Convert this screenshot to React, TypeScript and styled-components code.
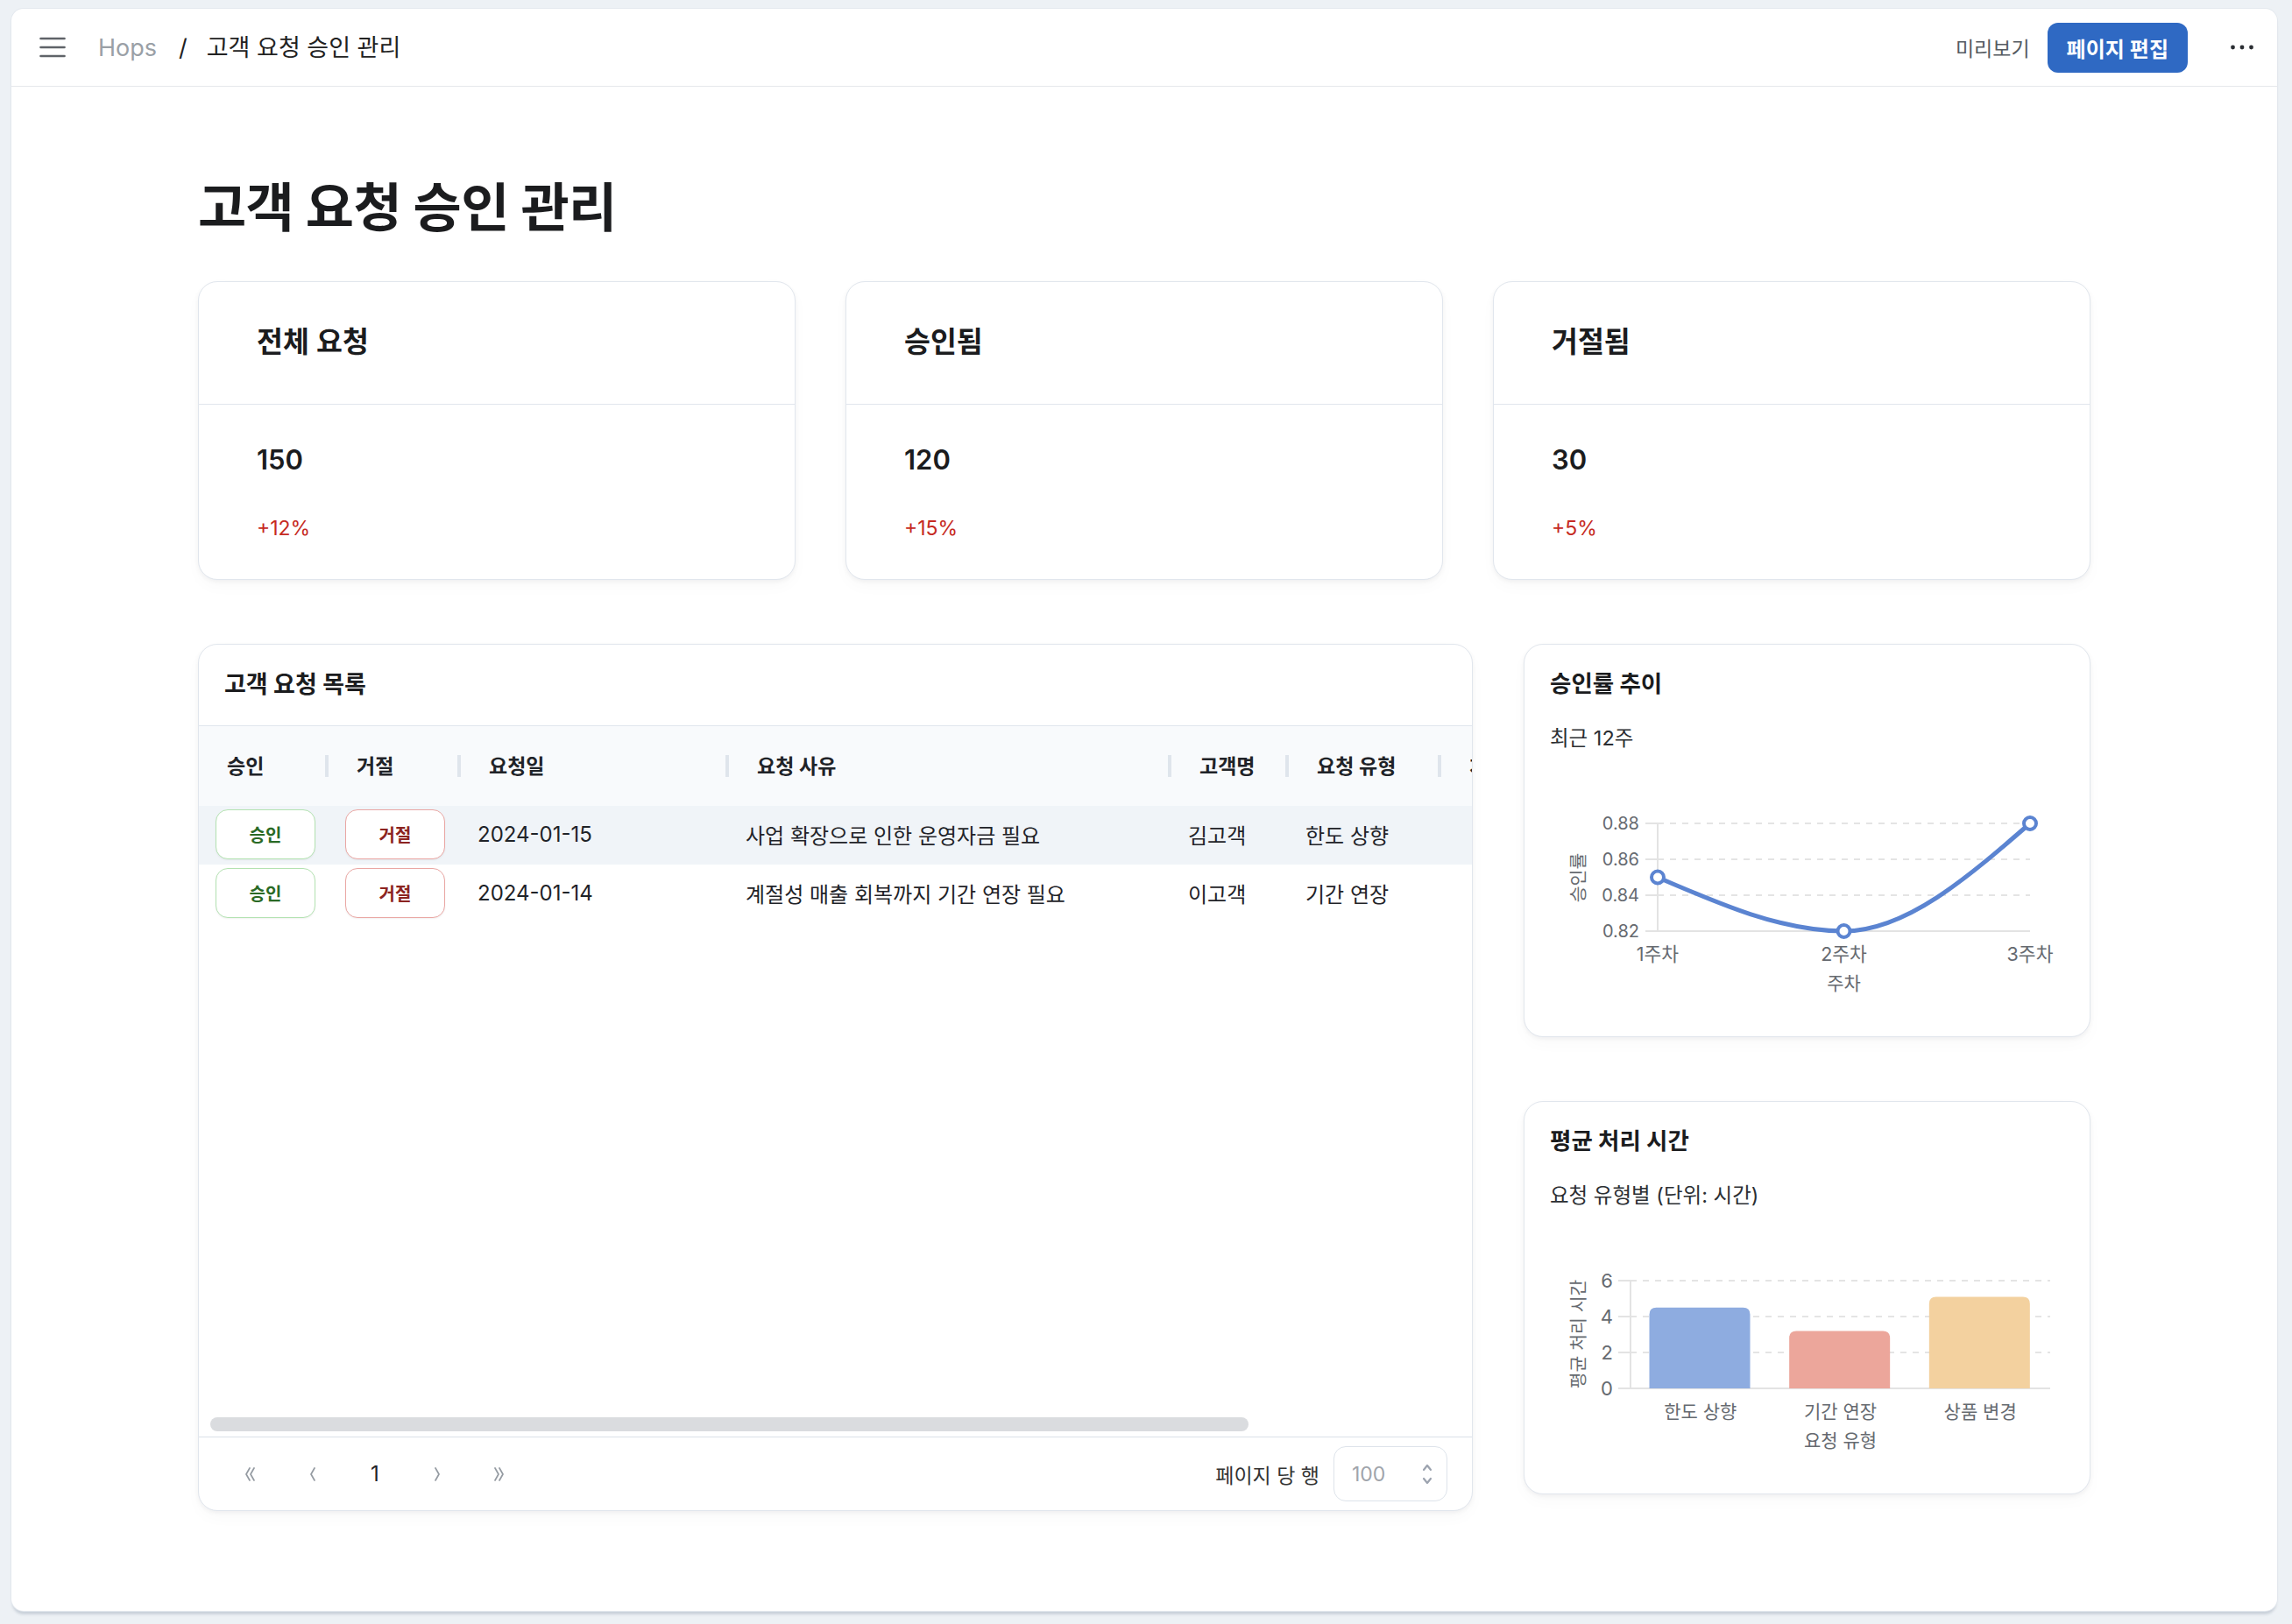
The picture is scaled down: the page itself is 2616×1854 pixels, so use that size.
import React from 'react';
import styled, { createGlobalStyle } from 'styled-components';

const FONT = `Inter, "Noto Sans CJK KR", "Noto Sans", sans-serif`;

const Global = createGlobalStyle`
  html, body { margin: 0; padding: 0; background: #edf1f5; }
  body { font-family: ${FONT}; color: #1f2328; -webkit-font-smoothing: antialiased; }
  * { box-sizing: border-box; }
`;

const Frame = styled.div`
  height: 1854px;
  padding: 10px 17px 15px 13px;
  display: flex;
`;

const Panel = styled.div`
  flex: 1;
  background: #fff;
  border-radius: 14px;
  box-shadow: 0 0 0 1px #e3e8ee, 0 5px 3px -1px rgba(120, 135, 155, 0.3);
  display: flex;
  flex-direction: column;
  overflow: hidden;
`;

const TopBar = styled.header`
  height: 89px;
  flex: none;
  border-bottom: 1px solid #e6e8eb;
  display: flex;
  align-items: center;
  padding: 0 15px 0 31px;
`;

const IconButton = styled.button<{ $w?: number }>`
  border: 0;
  background: transparent;
  padding: 0;
  display: flex;
  align-items: center;
  justify-content: center;
  width: ${(p) => p.$w ?? 32}px;
  height: 40px;
  color: #5f6368;
  cursor: pointer;
`;

const MoreButton = styled(IconButton)`
  margin-left: 37px;
`;

const Crumbs = styled.nav`
  display: flex;
  align-items: center;
  margin-left: 36px;
  font-size: 27px;
  line-height: 1;
`;

const CrumbRoot = styled.span`
  color: #9aa0a6;
`;

const CrumbSep = styled.span`
  color: #222;
  margin: 0 22px 0 25px;
`;

const CrumbCurrent = styled.span`
  color: #222;
`;

const Spacer = styled.div`
  flex: 1;
`;

const PreviewLink = styled.span`
  font-size: 23px;
  color: #555b61;
`;

const PrimaryButton = styled.button`
  margin-left: 20px;
  height: 57px;
  padding: 0 22px;
  border: 0;
  border-radius: 12px;
  background: #2f69c3;
  color: #fff;
  font-family: ${FONT};
  font-size: 24px;
  font-weight: 600;
`;

const Main = styled.main`
  flex: 1;
`;

const Content = styled.div`
  width: 2160px;
  margin: 0 auto;
`;

const PageTitle = styled.h1`
  margin: 103px 0 49px;
  font-size: 60px;
  line-height: 70px;
  font-weight: 700;
  letter-spacing: -0.6px;
  color: #1b1c1e;
`;

const StatGrid = styled.div`
  display: grid;
  grid-template-columns: repeat(3, 1fr);
  gap: 57px;
`;

const Card = styled.section`
  background: #fff;
  border: 1px solid #e1e6ed;
  border-radius: 22px;
  box-shadow: 0 2px 5px rgba(15, 23, 42, 0.05), 0 8px 18px rgba(15, 23, 42, 0.025);
`;

const StatCard = styled(Card)`
  height: 341px;
`;

const StatHead = styled.div`
  height: 140px;
  display: flex;
  align-items: center;
  padding: 0 66px 8px;
  border-bottom: 1px solid #e1e6ed;
  font-size: 32.5px;
  font-weight: 600;
  color: #1b1c1e;
`;

const StatBody = styled.div`
  padding: 43px 66px 0;
`;

const StatValue = styled.div`
  font-size: 31px;
  line-height: 40px;
  font-weight: 600;
  color: #1b1c1e;
`;

const StatDelta = styled.div`
  margin-top: 44px;
  font-size: 23px;
  line-height: 28px;
  color: #c62a22;
`;

const Lower = styled.div`
  margin-top: 73px;
  display: grid;
  grid-template-columns: 1fr 647px;
  gap: 58px;
  align-items: start;
`;

const TableCard = styled(Card)`
  height: 990px;
  display: flex;
  flex-direction: column;
  overflow: hidden;
`;

const CardTitleBar = styled.div`
  height: 93px;
  flex: none;
  display: flex;
  align-items: center;
  padding: 0 29px 5px;
  border-bottom: 1px solid #e1e6ed;
  font-size: 27px;
  font-weight: 700;
  color: #1b1c1e;
`;

const TableArea = styled.div`
  flex: 1;
  overflow: hidden;
  display: flex;
  flex-direction: column;
`;

const Table = styled.table`
  width: 1784px;
  table-layout: fixed;
  border-collapse: collapse;
  flex: none;
`;

const Th = styled.th`
  position: relative;
  height: 91px;
  padding: 0 0 4px 32px;
  background: #f8fafc;
  text-align: left;
  font-size: 23px;
  font-weight: 600;
  color: #1f2328;
  white-space: nowrap;
  overflow: hidden;
  &::after {
    content: '';
    position: absolute;
    right: 0;
    top: 33px;
    width: 4px;
    height: 25px;
    background: #dfe5ec;
  }
`;

const Tr = styled.tr<{ $active?: boolean }>`
  background: ${(p) => (p.$active ? '#f0f4f8' : '#fff')};
`;

const Td = styled.td`
  height: 67px;
  padding: 0 0 2px 19px;
  font-size: 24px;
  color: #1f2328;
  white-space: nowrap;
  overflow: hidden;
`;

const DecisionButton = styled.button<{ $tone: 'ok' | 'no' }>`
  width: 114px;
  height: 57px;
  border-radius: 14px;
  background: #fff;
  border: 1.5px solid ${(p) => (p.$tone === 'ok' ? '#b3e2b1' : '#eaa7a4')};
  color: ${(p) => (p.$tone === 'ok' ? '#2a6a25' : '#8c2420')};
  font-family: ${FONT};
  font-size: 20px;
  font-weight: 600;
  box-shadow: 0 1px 2px rgba(0, 0, 0, 0.06);
  display: block;
`;

const FillArea = styled.div`
  flex: 1;
`;

const ScrollTrack = styled.div`
  flex: none;
  padding: 0 13px;
  margin-bottom: 6px;
`;

const ScrollThumb = styled.div`
  width: 1185px;
  height: 16px;
  border-radius: 8px;
  background: #dadcdf;
`;

const TableFooter = styled.div`
  height: 84px;
  flex: none;
  border-top: 1px solid #dbe1e8;
  display: flex;
  align-items: center;
  justify-content: space-between;
  padding: 0 28px 0 37px;
`;

const Pager = styled.div`
  display: flex;
  align-items: center;
  gap: 27px;
`;

const PagerButton = styled.button`
  width: 44px;
  height: 44px;
  border: 0;
  padding: 0;
  background: transparent;
  display: flex;
  align-items: center;
  justify-content: center;
  color: #9aa0a6;
  font-family: ${FONT};
  font-size: 24px;
`;

const PageNumber = styled(PagerButton)`
  color: #1f2328;
`;

const RowsPer = styled.div`
  display: flex;
  align-items: center;
  gap: 16px;
  font-size: 23px;
  color: #333;
`;

const SelectBox = styled.div`
  width: 130px;
  height: 63px;
  border: 1px solid #dde3ea;
  border-radius: 14px;
  display: flex;
  align-items: center;
  justify-content: space-between;
  padding: 0 16px 0 20px;
  color: #a0a4ab;
  font-size: 23px;
`;

const SideColumn = styled.div`
  display: flex;
  flex-direction: column;
  gap: 73px;
`;

const ChartCard = styled(Card)`
  height: 449px;
  padding: 26px 29px 0;
`;

const ChartTitle = styled.h3`
  margin: 0;
  font-size: 26.5px;
  line-height: 36px;
  font-weight: 700;
  color: #1b1c1e;
`;

const ChartSub = styled.p`
  margin: 29px 0 0;
  font-size: 23.5px;
  line-height: 32px;
  color: #2c2f33;
`;

const ChartSvg = styled.svg`
  display: block;
  margin-top: 21px;
  font-family: ${FONT};
`;

const Hamburger = () => (
  <svg width="30" height="24" viewBox="0 0 30 24">
    <g stroke="#5f6368" strokeWidth="2.6" strokeLinecap="round">
      <line x1="1.5" y1="2" x2="28.5" y2="2" />
      <line x1="1.5" y1="12" x2="28.5" y2="12" />
      <line x1="1.5" y1="22" x2="28.5" y2="22" />
    </g>
  </svg>
);

const Dots = () => (
  <svg width="26" height="8" viewBox="0 0 26 8">
    <g fill="#2b2e33">
      <circle cx="2.5" cy="4" r="2.4" />
      <circle cx="13" cy="4" r="2.4" />
      <circle cx="23.5" cy="4" r="2.4" />
    </g>
  </svg>
);

const Chevron = ({ dir, double }: { dir: 'l' | 'r'; double?: boolean }) => {
  const pts = (x: number) =>
    dir === 'l' ? `${x + 4},1 ${x},8 ${x + 4},15` : `${x},1 ${x + 4},8 ${x},15`;
  return (
    <svg width="16" height="16" viewBox="0 0 16 16">
      <g fill="none" stroke="#959ba2" strokeWidth="1.7" strokeLinecap="round" strokeLinejoin="round">
        {double ? (
          <>
            <polyline points={pts(3)} />
            <polyline points={pts(8)} />
          </>
        ) : (
          <polyline points={pts(6)} />
        )}
      </g>
    </svg>
  );
};

const UpDown = () => (
  <svg width="12" height="26" viewBox="0 0 12 26">
    <g fill="none" stroke="#9ca3af" strokeWidth="2.2" strokeLinecap="round" strokeLinejoin="round">
      <polyline points="2,8 6,3 10,8" />
      <polyline points="2,18 6,23 10,18" />
    </g>
  </svg>
);

const LABEL = '#666a70';
const GRID = '#e4e4e4';
const AXIS = '#e3e3e3';
const GRID_YS = [60, 101, 142];

const TrendChart = () => {
  const ticks = [
    { y: 60, t: '0.88' },
    { y: 101, t: '0.86' },
    { y: 142, t: '0.84' },
    { y: 183, t: '0.82' },
  ];
  const pts = [
    { x: 123, y: 121.5, l: '1주차' },
    { x: 335.5, y: 183, l: '2주차' },
    { x: 548, y: 60, l: '3주차' },
  ];
  return (
    <ChartSvg width="588" height="270" viewBox="0 0 588 270">
      {GRID_YS.map((y) => (
        <line key={y} x1={123} x2={548} y1={y} y2={y} stroke={GRID} strokeWidth={2} strokeDasharray="7 7" />
      ))}
      <line x1={123} y1={60} x2={123} y2={184} stroke={AXIS} strokeWidth={2} />
      <line x1={122} y1={183} x2={548} y2={183} stroke={AXIS} strokeWidth={2} />
      {ticks.map((k) => (
        <g key={k.t}>
          <line x1={109} x2={123} y1={k.y} y2={k.y} stroke={AXIS} strokeWidth={2} />
          <text x={102} y={k.y + 7} textAnchor="end" fontSize={20} fill={LABEL}>
            {k.t}
          </text>
        </g>
      ))}
      <path
        d="M123,121.5 C193.8,152.2 264.7,183 335.5,183 C406.3,183 477.2,121.5 548,60"
        fill="none"
        stroke="#5b84d1"
        strokeWidth={5}
        strokeLinecap="round"
      />
      {pts.map((p) => (
        <g key={p.l}>
          <circle cx={p.x} cy={p.y} r={7} fill="#fff" stroke="#5b84d1" strokeWidth={4} />
          <text x={p.x} y={217} textAnchor="middle" fontSize={21.5} fill={LABEL}>
            {p.l}
          </text>
        </g>
      ))}
      <text x={335.5} y={250} textAnchor="middle" fontSize={21} fill={LABEL}>
        주차
      </text>
      <text
        x={0}
        y={0}
        transform="translate(40 122) rotate(-90)"
        textAnchor="middle"
        fontSize={20.5}
        fill={LABEL}
      >
        승인률
      </text>
    </ChartSvg>
  );
};

const BarChart = () => {
  const base = 183;
  const unit = 20.5;
  const left = 92;
  const right = 571;
  const band = (right - left) / 3;
  const bars = [
    { v: 4.5, l: '한도 상향', c: '#8eace0' },
    { v: 3.2, l: '기간 연장', c: '#eca69b' },
    { v: 5.1, l: '상품 변경', c: '#f3d19f' },
  ];
  const ticks = [
    { y: 60, t: '6' },
    { y: 101, t: '4' },
    { y: 142, t: '2' },
    { y: 183, t: '0' },
  ];
  const barPath = (x: number, top: number, w: number, r: number) =>
    `M${x},${base} L${x},${top + r} Q${x},${top} ${x + r},${top} L${x + w - r},${top} Q${x + w},${top} ${x + w},${top + r} L${x + w},${base} Z`;
  return (
    <ChartSvg width="588" height="270" viewBox="0 0 588 270">
      {GRID_YS.map((y) => (
        <line key={y} x1={left} x2={right} y1={y} y2={y} stroke={GRID} strokeWidth={2} strokeDasharray="7 7" />
      ))}
      <line x1={left} y1={60} x2={left} y2={184} stroke={AXIS} strokeWidth={2} />
      <line x1={left - 1} y1={183} x2={right} y2={183} stroke={AXIS} strokeWidth={2} />
      {ticks.map((k) => (
        <g key={k.t}>
          <line x1={left - 14} x2={left} y1={k.y} y2={k.y} stroke={AXIS} strokeWidth={2} />
          <text x={left - 20} y={k.y + 8} textAnchor="end" fontSize={22} fill={LABEL}>
            {k.t}
          </text>
        </g>
      ))}
      {bars.map((b, i) => {
        const x = left + i * band + 21.5;
        const cx = left + i * band + band / 2;
        return (
          <g key={b.l}>
            <path d={barPath(x, base - b.v * unit, 115, 8)} fill={b.c} />
            <text x={cx} y={217} textAnchor="middle" fontSize={21} fill={LABEL}>
              {b.l}
            </text>
          </g>
        );
      })}
      <text x={left + band * 1.5} y={250} textAnchor="middle" fontSize={21} fill={LABEL}>
        요청 유형
      </text>
      <text
        x={0}
        y={0}
        transform="translate(40 121) rotate(-90)"
        textAnchor="middle"
        fontSize={20.5}
        fill={LABEL}
      >
        평균 처리 시간
      </text>
    </ChartSvg>
  );
};

const stats = [
  { title: '전체 요청', value: '150', delta: '+12%' },
  { title: '승인됨', value: '120', delta: '+15%' },
  { title: '거절됨', value: '30', delta: '+5%' },
];

const columns = [
  { key: 'a', label: '승인', w: 148 },
  { key: 'r', label: '거절', w: 151 },
  { key: 'd', label: '요청일', w: 306 },
  { key: 'reason', label: '요청 사유', w: 505 },
  { key: 'name', label: '고객명', w: 134 },
  { key: 'type', label: '요청 유형', w: 174 },
  { key: 'status', label: '처리 상태', w: 366 },
];

const rows = [
  { d: '2024-01-15', reason: '사업 확장으로 인한 운영자금 필요', name: '김고객', type: '한도 상향' },
  { d: '2024-01-14', reason: '계절성 매출 회복까지 기간 연장 필요', name: '이고객', type: '기간 연장' },
];

export default function App() {
  return (
    <>
      <Global />
      <Frame>
        <Panel>
          <TopBar>
            <IconButton $w={32} aria-label="menu">
              <Hamburger />
            </IconButton>
            <Crumbs>
              <CrumbRoot>Hops</CrumbRoot>
              <CrumbSep>/</CrumbSep>
              <CrumbCurrent>고객 요청 승인 관리</CrumbCurrent>
            </Crumbs>
            <Spacer />
            <PreviewLink>미리보기</PreviewLink>
            <PrimaryButton>페이지 편집</PrimaryButton>
            <MoreButton $w={50} aria-label="more">
              <Dots />
            </MoreButton>
          </TopBar>
          <Main>
            <Content>
              <PageTitle>고객 요청 승인 관리</PageTitle>
              <StatGrid>
                {stats.map((s) => (
                  <StatCard key={s.title}>
                    <StatHead>{s.title}</StatHead>
                    <StatBody>
                      <StatValue>{s.value}</StatValue>
                      <StatDelta>{s.delta}</StatDelta>
                    </StatBody>
                  </StatCard>
                ))}
              </StatGrid>
              <Lower>
                <TableCard>
                  <CardTitleBar>고객 요청 목록</CardTitleBar>
                  <TableArea>
                    <Table>
                      <colgroup>
                        {columns.map((c) => (
                          <col key={c.key} style={{ width: c.w }} />
                        ))}
                      </colgroup>
                      <thead>
                        <tr>
                          {columns.map((c) => (
                            <Th key={c.key}>{c.label}</Th>
                          ))}
                        </tr>
                      </thead>
                      <tbody>
                        {rows.map((r, i) => (
                          <Tr key={r.d} $active={i === 0}>
                            <Td>
                              <DecisionButton $tone="ok">승인</DecisionButton>
                            </Td>
                            <Td>
                              <DecisionButton $tone="no">거절</DecisionButton>
                            </Td>
                            <Td>{r.d}</Td>
                            <Td>{r.reason}</Td>
                            <Td>{r.name}</Td>
                            <Td>{r.type}</Td>
                            <Td />
                          </Tr>
                        ))}
                      </tbody>
                    </Table>
                    <FillArea />
                    <ScrollTrack>
                      <ScrollThumb />
                    </ScrollTrack>
                  </TableArea>
                  <TableFooter>
                    <Pager>
                      <PagerButton aria-label="first">
                        <Chevron dir="l" double />
                      </PagerButton>
                      <PagerButton aria-label="prev">
                        <Chevron dir="l" />
                      </PagerButton>
                      <PageNumber>1</PageNumber>
                      <PagerButton aria-label="next">
                        <Chevron dir="r" />
                      </PagerButton>
                      <PagerButton aria-label="last">
                        <Chevron dir="r" double />
                      </PagerButton>
                    </Pager>
                    <RowsPer>
                      페이지 당 행
                      <SelectBox>
                        100
                        <UpDown />
                      </SelectBox>
                    </RowsPer>
                  </TableFooter>
                </TableCard>
                <SideColumn>
                  <ChartCard>
                    <ChartTitle>승인률 추이</ChartTitle>
                    <ChartSub>최근 12주</ChartSub>
                    <TrendChart />
                  </ChartCard>
                  <ChartCard>
                    <ChartTitle>평균 처리 시간</ChartTitle>
                    <ChartSub>요청 유형별 (단위: 시간)</ChartSub>
                    <BarChart />
                  </ChartCard>
                </SideColumn>
              </Lower>
            </Content>
          </Main>
        </Panel>
      </Frame>
    </>
  );
}
